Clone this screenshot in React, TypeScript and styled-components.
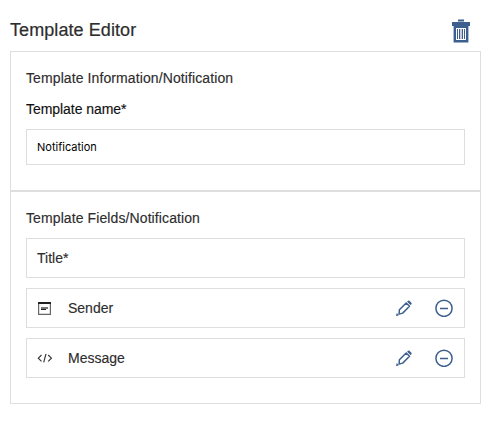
import React from "react";
import styled, { createGlobalStyle } from "styled-components";

const GlobalStyle = createGlobalStyle`
  * { box-sizing: border-box; }
  body { margin: 0; background: #fff; font-family: "Liberation Sans", Arial, sans-serif; color: #2d2d2d; }
`;

const Page = styled.main`
  width: 491px;
  height: 448px;
  padding: 10px 10px 0;
`;

const Header = styled.header`
  display: flex;
  align-items: flex-start;
  justify-content: space-between;
  height: 41px;
  padding-right: 10px;
`;

const Heading = styled.h1`
  margin: 0;
  font-size: 18px;
  line-height: 41px;
  font-weight: 400;
  letter-spacing: 0.08px;
  -webkit-text-stroke: 0.2px currentColor;
`;

const IconButton = styled.button`
  display: flex;
  padding: 0;
  border: 0;
  background: none;
  color: #3d5f8e;
`;

const DeleteButton = styled(IconButton)`
  margin-top: 8px;
`;

const Panel = styled.section<{ $height: number }>`
  width: 471px;
  height: ${(p) => p.$height}px;
  padding: 16px 15px 0;
  border: 1px solid #dedede;
`;

const PanelTitle = styled.h2`
  margin: 0;
  font-size: 14px;
  line-height: 20px;
  font-weight: 400;
  letter-spacing: 0.1px;
  -webkit-text-stroke: 0.15px currentColor;
`;

const Label = styled.label`
  display: block;
  margin: 11px 0 10px;
  font-size: 14px;
  line-height: 20px;
  letter-spacing: -0.05px;
  color: #111;
  -webkit-text-stroke: 0.15px currentColor;
`;

const NameInput = styled.input`
  display: block;
  width: 439px;
  height: 36px;
  padding: 0 10px;
  border: 1px solid #dedede;
  border-radius: 0;
  outline: 0;
  color: #000;
  font: 11px Inter, sans-serif;
`;

const FieldList = styled.div`
  display: grid;
  gap: 10px;
  margin-top: 10px;
`;

const Field = styled.div`
  display: flex;
  align-items: center;
  height: 40px;
  padding: 0 11px 0 10px;
  border: 1px solid #dedede;
  font-size: 14px;
  -webkit-text-stroke: 0.15px currentColor;
`;

const FieldIcon = styled.span`
  display: flex;
  width: 31px;
  color: #3a3a3a;
`;

const Actions = styled.div`
  display: flex;
  align-items: center;
  gap: 22px;
  margin-left: auto;
`;

const TrashIcon = () => (
  <svg width="20" height="26" viewBox="0 0 20 26" fill="currentColor">
    <path d="M7 1.4h6v2.2H7zM1 4h18v4H1z" />
    <path fillRule="evenodd" d="M2.6 8h14.8v16.4H2.6zM5 10v12h10V10z" />
    <path d="M6 11h1v10H6zM8 11h1v10H8zM11 11h1v10h-1zM13 11h1v10h-1z" />
    <path d="M9 11h2v10H9z" opacity=".3" />
  </svg>
);

const FormIcon = () => (
  <svg width="15" height="16" viewBox="0 0 15 16" fill="none">
    <path d="M1.6 4v10.4h11.8V4" stroke="#666" strokeWidth="1.2" />
    <path d="M1 2h13v2H1z" fill="#222" />
    <path d="M4 7h7v2H4z" fill="#777" />
    <path d="M4 9h5v1H4z" fill="#222" />
  </svg>
);

const CodeIcon = () => (
  <svg width="16" height="14" viewBox="0 0 16 14" fill="none" stroke="currentColor" strokeWidth="1.2">
    <path d="M4.5 4 1.3 7.2l3.2 3.2M11.2 4l3.2 3.2-3.2 3.2M9 2.8l-2.3 8.6" />
  </svg>
);

const PencilIcon = () => (
  <svg width="18" height="18" viewBox="0 0 18 18" fill="none" stroke="currentColor">
    <path d="M4.4 10.8 11.2 4l3.3 3.3-6.8 6.8-3.6 1z" strokeWidth="1.5" strokeLinejoin="round" />
    <path d="m12.1 2.7.9-.9q.7-.7 1.4 0l2 2q.7.7 0 1.4l-.9.9z" fill="currentColor" stroke="none" />
    <path d="m1.8 14.1 2.1 2.1-3 1z" fill="currentColor" stroke="none" />
  </svg>
);

const RemoveIcon = () => (
  <svg width="18" height="18" viewBox="0 0 18 18" fill="none" stroke="currentColor">
    <circle cx="9" cy="9.3" r="8.1" strokeWidth="1.5" />
    <path d="M5 9.5h8" strokeWidth="1.5" />
  </svg>
);

const EditableField = ({ icon, name }: { icon: React.ReactNode; name: string }) => (
  <Field>
    <FieldIcon>{icon}</FieldIcon>
    {name}
    <Actions>
      <IconButton aria-label={`Edit ${name}`}><PencilIcon /></IconButton>
      <IconButton aria-label={`Remove ${name}`}><RemoveIcon /></IconButton>
    </Actions>
  </Field>
);

export default function App() {
  return (
    <Page>
      <GlobalStyle />
      <Header>
        <Heading>Template Editor</Heading>
        <DeleteButton aria-label="Delete template"><TrashIcon /></DeleteButton>
      </Header>
      <Panel $height={140}>
        <PanelTitle>Template Information/Notification</PanelTitle>
        <Label htmlFor="template-name">Template name*</Label>
        <NameInput id="template-name" defaultValue="Notification" />
      </Panel>
      <Panel $height={213}>
        <PanelTitle>Template Fields/Notification</PanelTitle>
        <FieldList>
          <Field>Title*</Field>
          <EditableField icon={<FormIcon />} name="Sender" />
          <EditableField icon={<CodeIcon />} name="Message" />
        </FieldList>
      </Panel>
    </Page>
  );
}
